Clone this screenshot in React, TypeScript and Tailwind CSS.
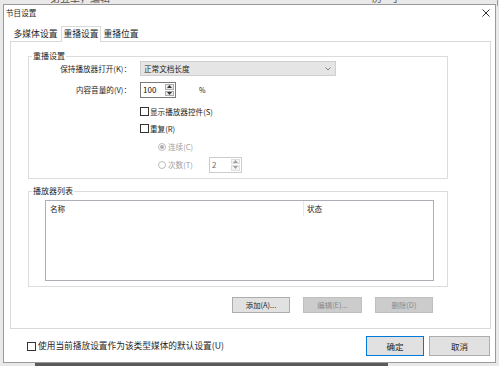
import React from "react";

const Check = () => (
  <span className="inline-block w-[9px] h-[9px] border border-[#333333] bg-white shrink-0" />
);

const Radio = ({ checked }: { checked?: boolean }) => (
  <span className="relative inline-flex items-center justify-center w-[8px] h-[8px] rounded-full border border-[#bcbcbc] bg-white shrink-0">
    {checked && <span className="w-[4px] h-[4px] rounded-full bg-[#b0b0b0]" />}
  </span>
);

const Spin = ({ value, w, disabled }: { value: string; w: string; disabled?: boolean }) => (
  <div
    className={`flex items-stretch h-[16px] ${w} border ${
      disabled ? "border-[#cccccc]" : "border-[#7a7a7a]"
    } bg-white`}
  >
    <div className={`flex-1 flex items-center pl-[2px] text-[8px] ${disabled ? "text-[#6d6d6d]" : "text-[#111]"}`}>
      {value}
    </div>
    <div className="flex flex-col justify-center gap-[1px] pr-[1px] py-[1px]">
      <div className={`w-[9px] h-[6px] flex items-center justify-center border ${disabled ? "border-[#dddddd] bg-[#f4f4f4]" : "border-[#adadad] bg-[#ececec]"}`}>
        <svg width="5" height="3" viewBox="0 0 5 3">
          <path d="M0 3 L2.5 0 L5 3 Z" fill={disabled ? "#a0a0a0" : "#333"} />
        </svg>
      </div>
      <div className={`w-[9px] h-[6px] flex items-center justify-center border ${disabled ? "border-[#dddddd] bg-[#f4f4f4]" : "border-[#adadad] bg-[#ececec]"}`}>
        <svg width="5" height="3" viewBox="0 0 5 3">
          <path d="M0 0 L2.5 3 L5 0 Z" fill={disabled ? "#a0a0a0" : "#333"} />
        </svg>
      </div>
    </div>
  </div>
);

export default function App() {
  return (
    <div className="relative w-[499px] h-[366px] overflow-hidden bg-[#e9e9e9] font-['Noto_Sans_CJK_SC','Noto_Sans',sans-serif] text-[#1e1e1e] leading-none">
      {/* window behind */}
      <div className="absolute left-[50px] top-[-7px] text-[10px] text-[#555]">第五章，编辑</div>
      <div className="absolute left-[372px] top-[-7px] text-[10px] text-[#555]">历&nbsp;&nbsp;&nbsp;&nbsp;乎</div>
      <div className="absolute left-[497px] top-0 w-px h-[6px] bg-[#9a9a9a]" />

      <div className="pl-[3px] pt-[4px]">
        <div className="relative w-[493px] h-[359px] bg-white border border-[#9a9a9a] flex flex-col">
          {/* title */}
          <div className="flex items-center justify-between h-[15px] pl-[2px] pr-[5px]">
            <span className="text-[7.6px]">节目设置</span>
            <svg width="8" height="8" viewBox="0 0 8 8">
              <path d="M0.5 0.5 L7.5 7.5 M7.5 0.5 L0.5 7.5" stroke="#333" strokeWidth="1" />
            </svg>
          </div>

          {/* tabs */}
          <div className="mt-[6px] ml-[6px] h-[16px] flex items-stretch text-[8.8px]">
            <div className="w-[51px] flex items-center justify-center">多媒体设置</div>
            <div className="relative z-10 w-[40px] flex items-center justify-center bg-white border-l border-t border-r border-[#d9d9d9]">
              重播设置
            </div>
            <div className="w-[40px] flex items-center justify-center">重播位置</div>
          </div>

          {/* panel */}
          <div className="-mt-px ml-[6px] w-[481px] h-[288px] border border-[#d9d9d9] flex flex-col">
            {/* group 1 */}
            <div className="relative ml-[17px] mt-[14px] w-[420px] h-[123px] border border-[#dcdcdc] flex flex-col text-[7.6px]">
              <span className="absolute left-[3px] -top-[5px] bg-white px-[1px] text-[8px]">重播设置</span>
              <div className="mt-[4px] flex items-center h-[15px]">
                <div className="w-[111px] text-right pr-[9px]">保持播放器打开(K)：</div>
                <div className="w-[196px] h-[15px] bg-[#e5e5e5] border border-[#cfcfcf] flex items-center justify-between pl-[3px] pr-[4px]">
                  <span>正常文档长度</span>
                  <svg width="6" height="4" viewBox="0 0 6 4">
                    <path d="M0.5 0.5 L3 3 L5.5 0.5" stroke="#777" strokeWidth="0.9" fill="none" />
                  </svg>
                </div>
              </div>
              <div className="mt-[6px] flex items-center h-[16px]">
                <div className="w-[111px] text-right pr-[9px]">内容音量的(V)：</div>
                <Spin value="100" w="w-[36px]" />
                <span className="ml-[23px] text-[7px]">%</span>
              </div>
              <div className="mt-[9px] ml-[111px] flex items-center h-[9px] gap-[1px]">
                <Check />
                <span>显示播放器控件(S)</span>
              </div>
              <div className="mt-[8px] ml-[111px] flex items-center h-[9px] gap-[1px]">
                <Check />
                <span>重复(R)</span>
              </div>
              <div className="mt-[10px] ml-[129px] flex items-center h-[8px] gap-[2px] text-[#a0a0a0]">
                <Radio checked />
                <span>连续(C)</span>
              </div>
              <div className="mt-[5px] ml-[129px] flex items-center h-[17px] text-[#a0a0a0]">
                <Radio />
                <span className="ml-[2px] w-[41px]">次数(T)</span>
                <Spin value="2" w="w-[33px]" disabled />
              </div>
            </div>

            {/* group 2 */}
            <div className="relative ml-[17px] mt-[12px] w-[420px] h-[96px] border border-[#dcdcdc] flex flex-col text-[7.6px]">
              <span className="absolute left-[3px] -top-[5px] bg-white px-[1px] text-[8px]">播放器列表</span>
              <div className="ml-[16px] mt-[8px] w-[389px] h-[81px] border border-[#adadb5] bg-white">
                <div className="flex h-[15px] items-center">
                  <div className="w-[258px] h-full flex items-center pl-[4px] border-r border-[#e8e8e8]">名称</div>
                  <div className="pl-[3px]">状态</div>
                </div>
              </div>
            </div>

            {/* list buttons */}
            <div className="mt-[10px] ml-[221px] flex gap-[13px] text-[7.4px]">
              <div className="w-[58px] h-[16px] bg-[#e1e1e1] border border-[#adadad] flex items-center justify-center">添加(A)...</div>
              <div className="w-[59px] h-[16px] bg-[#cccccc] border border-[#bfbfbf] text-[#8a8a8a] flex items-center justify-center">编辑(E)...</div>
              <div className="w-[58px] h-[16px] bg-[#cccccc] border border-[#bfbfbf] text-[#8a8a8a] flex items-center justify-center">删除(D)</div>
            </div>
          </div>

          {/* bottom row */}
          <div className="mt-[7px] h-[20px] flex items-center pl-[23px] pr-[5px]">
            <Check />
            <span className="ml-[2px] text-[8.7px]">使用当前播放设置作为该类型媒体的默认设置(U)</span>
            <div className="ml-auto flex gap-[5px] text-[8.5px]">
              <div className="w-[58px] h-[20px] bg-[#e1e1e1] border border-[#0078d7] flex items-center justify-center">确定</div>
              <div className="w-[61px] h-[20px] bg-[#e1e1e1] border border-[#adadad] flex items-center justify-center">取消</div>
            </div>
          </div>
        </div>
        <div className="ml-[32px] w-[353px] h-[3px] bg-[#5a5a5a]" />
      </div>
    </div>
  );
}
